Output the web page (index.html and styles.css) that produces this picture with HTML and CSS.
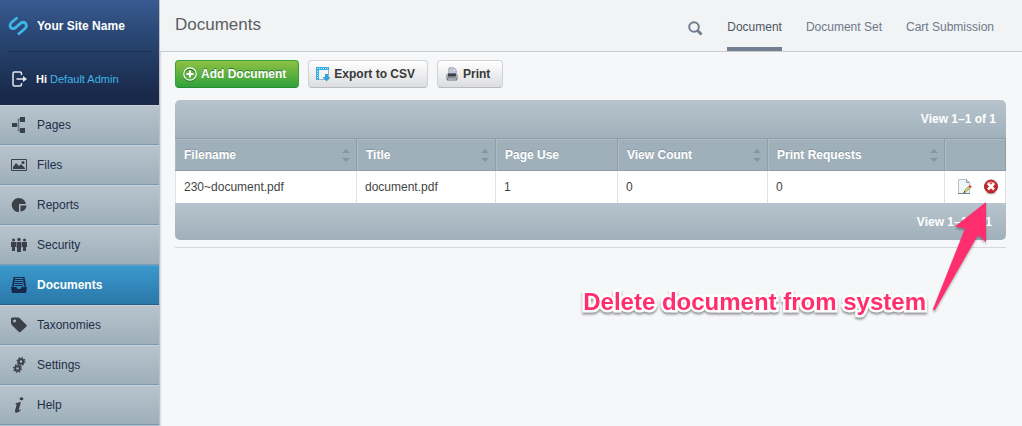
FILE: index.html
```html
<!DOCTYPE html>
<html lang="en">
<head>
    <meta charset="UTF-8">
    <meta name="viewport" content="width=device-width, initial-scale=1.0">
    <title>Documents</title>
    <link rel="stylesheet" href="styles.css">
</head>
<body>
    <div class="cms">
        <aside class="sidebar">
            <div class="sidebar-header">
                <a class="brand" href="#">
                    <svg class="brand-logo" width="20" height="20" viewBox="0 0 20 20" fill="none" stroke="#3fb5e8" stroke-width="2.800">
                        <path d="M9.500 1.500L4 6C0 9.500 3 14.500 7 12L13 7C17 4.500 20.500 9.500 16.500 13L10 18.500"/>
                    </svg>
                    <span>Your Site Name</span>
                </a>
                <div class="login">
                    <a href="#" aria-label="Log out">
                        <svg width="15" height="16" viewBox="0 0 15 16" fill="none" stroke="#e4e8ee" stroke-width="1.500">
                            <path d="M9.500 4V2.500Q9.500 1 8 1H2.500Q1 1 1 2.500v11Q1 15 2.500 15H8q1.500 0 1.500-1.500V12M4.500 8H12"/>
                            <path d="M11 5l4 3-4 3z" fill="#e4e8ee" stroke="none"/>
                        </svg>
                    </a>
                    <span>Hi <a href="#">Default Admin</a></span>
                </div>
            </div>
            <ul class="menu">
                <li><a href="#">
                    <svg width="16" height="16" viewBox="0 0 16 16" fill="#3b4049">
                        <path d="M1 6h5v4H1zM9 0h5v5H9zM9 11h5v5H9z"/>
                        <path d="M6 8h2M9 2.500H7.500v11H9" fill="none" stroke="#667380" stroke-width="1.500"/>
                    </svg>
                    Pages</a></li>
                <li><a href="#">
                    <svg width="16" height="16" viewBox="0 0 16 16" fill="#3b4049">
                        <path d="M.5 2.500h15v11H.5z" fill="none" stroke="#3b4049"/>
                        <path d="M2 12V10l3-4 3 3 2-2 4 4v1z"/>
                        <circle cx="12" cy="5.500" r="1.500"/>
                    </svg>
                    Files</a></li>
                <li><a href="#">
                    <svg width="16" height="16" viewBox="0 0 16 16" fill="#3b4049">
                        <path d="M7.500 1a7 7 0 0 1 7.400 6H8v8A7 7 0 1 1 7.500 1z"/>
                        <path d="M9.500 8.500h6a6 6 0 0 1-6 6z"/>
                    </svg>
                    Reports</a></li>
                <li><a href="#">
                    <svg width="16" height="16" viewBox="0 0 16 16" fill="#3b4049">
                        <circle cx="2.500" cy="3" r="1.500"/>
                        <circle cx="8" cy="2.500" r="1.700"/>
                        <circle cx="13.500" cy="3" r="1.500"/>
                        <path d="M0 5h5v5H4v4H1v-4H0zM5.500 5h5v5.500H10V15H6v-4.500h-.5zM11 5h5v5h-1v4h-3v-4h-1z"/>
                    </svg>
                    Security</a></li>
                <li><a class="current" href="#">
                    <svg width="16" height="16" viewBox="0 0 16 16" fill="#16294a">
                        <path d="M2.500 0h11L15 9.500h-2L12 1H4L3 9.500H1z"/>
                        <path d="M4 2h8v1H4zM4 4h8v1H4zM4 6h8v1H4zM4 8h8v1H4z"/>
                        <path d="M0 10h5.500l1 2h3l1-2H16L15 16H1z"/>
                    </svg>
                    Documents</a></li>
                <li><a href="#">
                    <svg width="16" height="16" viewBox="0 0 16 16" fill="#3b4049">
                        <path fill-rule="evenodd" d="M1.500.5l5.500 0q1 0 2 1l6.500 6.500q.7.700 0 1.400L9.500 15q-.8.700-1.500 0L1.300 8.500Q0 7.300 0 6V2Q0 .5 1.500.5zM3.500 2.500a1.500 1.500 0 1 0 .01 3 1.500 1.500 0 1 0-.01-3z"/>
                    </svg>
                    Taxonomies</a></li>
                <li><a href="#">
                    <svg width="16" height="16" viewBox="0 0 16 16" fill="none" stroke="#3b4049" stroke-width="2">
                        <circle cx="10" cy="4.500" r="2.300"/>
                        <circle cx="6.500" cy="11.500" r="2.300"/>
                        <circle cx="10" cy="4.500" r="3.700" stroke-width="1.500" stroke-dasharray="1.450 1.450"/>
                        <circle cx="6.500" cy="11.500" r="3.700" stroke-width="1.500" stroke-dasharray="1.450 1.450"/>
                    </svg>
                    Settings</a></li>
                <li><a href="#">
                    <svg width="16" height="16" viewBox="0 0 16 16" fill="#3b4049">
                        <ellipse cx="10.500" cy="1.800" rx="1.900" ry="1.500"/>
                        <path d="M4.500 6.500Q7 5 10 5L7.800 12.500q-.3 1.500 2-.2l.2.700Q7.500 16 5 15.800q-1.500-.3-1-2.300l1.500-5q.3-1.500-1-1.500z"/>
                    </svg>
                    Help</a></li>
            </ul>
        </aside>

        <main class="content">
            <header class="content-header">
                <h1>Documents</h1>
                <button class="search" type="button" aria-label="Search">
                    <svg width="15" height="15" viewBox="0 0 15 15" fill="none" stroke="#6f7d90">
                        <circle cx="6" cy="6" r="4.800" stroke-width="2"/>
                        <path d="M9.500 9.500l4 4" stroke-width="3"/>
                    </svg>
                </button>
                <nav class="tabs">
                    <a class="current" href="#">Document</a>
                    <a href="#">Document Set</a>
                    <a href="#">Cart Submission</a>
                </nav>
            </header>

            <div class="panel">
                <div class="actions">
                    <button class="btn btn-add" type="button">
                        <svg width="16" height="16" viewBox="0 0 16 16" fill="none" stroke="#fff">
                            <circle cx="8" cy="9" r="6" stroke="#23702b" stroke-width="1.500"/>
                            <circle cx="8" cy="8" r="6.200" stroke-width="1.300"/>
                            <path d="M8 4.500v7M4.500 8h7" stroke-width="2"/>
                        </svg>
                        Add Document
                    </button>
                    <button class="btn" type="button">
                        <svg width="16" height="16" viewBox="0 0 16 16">
                            <path d="M1.500 1.500h12v12h-12z" fill="#f2f6f9" stroke="#9db0bd"/>
                            <path d="M1 1h13v3H4v10H1z" fill="#35ade0"/>
                            <path d="M2 2.500h11M2.500 5v8" fill="none" stroke="#c4e9f8" stroke-dasharray="1 1"/>
                            <path d="M10 8h3v3h2.500l-4 4.500-4-4.500H10z" fill="#35a3d8"/>
                        </svg>
                        Export to CSV
                    </button>
                    <button class="btn" type="button">
                        <svg width="16" height="16" viewBox="0 0 16 16">
                            <path d="M5 2h5l2 2v4H5z" fill="#f4f7fb" stroke="#838b98"/>
                            <path d="M6 4h4M6 6h5" stroke="#8c98ac"/>
                            <path d="M2 9l2-2h8l2 2v4H2z" fill="#a7abb5"/>
                            <path d="M4 7.500h8v3H4z" fill="#3b4048"/>
                            <path d="M4 12h8l1 2H3z" fill="#e6e9ef" stroke="#656b76"/>
                            <path d="M11 11h2" stroke="#c6b958"/>
                        </svg>
                        Print
                    </button>
                </div>

                <div class="grid-holder">
                    <table class="grid">
                        <colgroup>
                            <col class="col-filename">
                            <col class="col-title">
                            <col class="col-use">
                            <col class="col-views">
                            <col class="col-prints">
                            <col class="col-actions">
                        </colgroup>
                        <thead>
                            <tr class="grid-bar">
                                <td colspan="6">View 1–1 of 1</td>
                            </tr>
                            <tr class="grid-heading">
                                <th>Filename <button class="sort" type="button" aria-label="Sort by Filename"></button></th>
                                <th>Title <button class="sort" type="button" aria-label="Sort by Title"></button></th>
                                <th>Page Use</th>
                                <th>View Count <button class="sort" type="button" aria-label="Sort by View Count"></button></th>
                                <th>Print Requests <button class="sort" type="button" aria-label="Sort by Print Requests"></button></th>
                                <th></th>
                            </tr>
                        </thead>
                        <tbody>
                            <tr>
                                <td>230~document.pdf</td>
                                <td>document.pdf</td>
                                <td>1</td>
                                <td>0</td>
                                <td>0</td>
                                <td>
                                    <div class="row-actions">
                                        <a href="#" aria-label="Edit">
                                            <svg width="16" height="16" viewBox="0 0 16 16">
                                                <path d="M1.500.5h8l3 3v11h-11z" fill="#eff5f8" stroke="#b4c2ca"/>
                                                <path d="M9.500.5v3h3" fill="#cfe0e8" stroke="#7f9baa"/>
                                                <path d="M1 14.500h12" stroke="#6f838d"/>
                                                <path d="M7 13.500l1-2.500 4-4 1.500 1.500-4 4z" fill="#d5d662" stroke="#7b8040" stroke-width=".6"/>
                                                <path d="M11.500 7.500l1.500-1.500 1.800 1.800-1.500 1.500z" fill="#dc3c50"/>
                                                <path d="M6.500 14l.7-2 1.300 1.300z" fill="#30343a"/>
                                            </svg>
                                        </a>
                                        <a href="#" aria-label="Delete">
                                            <svg width="16" height="16" viewBox="0 0 16 16">
                                                <ellipse cx="8" cy="14" rx="5" ry="1.500" fill="#ccc"/>
                                                <circle cx="8" cy="7.500" r="6.500" fill="#c9252d" stroke="#a3191f"/>
                                                <path d="M3 5.500a5.500 5 0 0 1 10 0q-5-2.500-10 0z" fill="#e98084"/>
                                                <path d="M5 4.500l6 6M11 4.500l-6 6" stroke="#fff" stroke-width="2.500"/>
                                            </svg>
                                        </a>
                                    </div>
                                </td>
                            </tr>
                        </tbody>
                        <tfoot>
                            <tr class="grid-bar grid-footer">
                                <td colspan="6">View 1–1 of 1</td>
                            </tr>
                        </tfoot>
                    </table>

                    <!-- help callout, points at the delete icon -->
                    <div class="callout">
                        <span>Delete document from system</span>
                        <svg width="56" height="112" viewBox="0 0 56 112" fill="#ff2e6f">
                            <path d="M54 1L23 25.500l10 2L1 108q0 2 2 1L46 34l8 7z"/>
                        </svg>
                    </div>
                </div>
            </div>
        </main>
    </div>
</body>
</html>
```

FILE: styles.css
```css
* {
    box-sizing: border-box;
}

body {
    margin: 0;
    font-family: "Liberation Sans", Arial, Helvetica, sans-serif;
    font-size: 12px;
    line-height: 16px;
    color: #444;
    background: #f6f7f9;
}

a {
    color: inherit;
    text-decoration: none;
}

svg {
    display: block;
    flex: none;
}

button {
    font: inherit;
    cursor: pointer;
}

.cms {
    display: flex;
    min-height: 100vh;
}

/* Left menu */
.sidebar {
    flex: none;
    width: 160px;
    background: #b0bec7;
    border-right: 1px solid #bfc0c2;
    box-shadow: 1px 0 1px #dcdde0;
}

.sidebar-header {
    height: 105px;
    padding: 0 8px;
    color: #fff;
    font-weight: bold;
    background: linear-gradient(#375a90, #2b4977 30%, #19294a 90%);
}

.brand {
    display: flex;
    align-items: center;
    gap: 9px;
    height: 52px;
    border-bottom: 1px solid #1a2f55;
}

.login {
    display: flex;
    align-items: center;
    gap: 9px;
    height: 53px;
    padding-left: 4px;
    font-size: 11px;
}

.login span a {
    color: #3fb5e8;
    font-weight: normal;
}

.menu {
    margin: 0;
    padding: 0;
    list-style: none;
}

.menu a {
    display: flex;
    align-items: center;
    gap: 10px;
    height: 40px;
    padding-left: 11px;
    color: #1f2f4a;
    background: linear-gradient(#b7c4cd, #9eafba);
    border-top: 1px solid #c6d0d8;
    border-bottom: 1px solid #7d99b0;
}

.menu a.current {
    color: #fff;
    font-weight: bold;
    background: linear-gradient(#3a98cd, #2b78a9);
    border-top-color: #55a4d0;
    border-bottom-color: #265f88;
}

/* Top bar */
.content {
    flex: 1;
    min-width: 0;
}

.content-header {
    display: flex;
    align-items: center;
    height: 52px;
    padding: 0 28px 0 15px;
    background: #f2f3f4;
    border-bottom: 1px solid #cacbce;
}

.content-header h1 {
    margin: 0 auto 2px 0;
    font-size: 17px;
    font-weight: normal;
    line-height: 24px;
    color: #5b5e63;
}

.search {
    margin: 6px 24px 0 0;
    padding: 0;
    background: none;
    border: 0;
}

.tabs {
    display: flex;
    gap: 24px;
    height: 51px;
    color: #6b7a8c;
}

.tabs a {
    padding-top: 19px;
    border-bottom: 4px solid transparent;
}

.tabs a.current {
    color: #4d5866;
    border-bottom-color: #737f90;
}

/* Main area */
.panel {
    padding: 8px 16px 16px 15px;
}

.actions {
    display: flex;
    gap: 9px;
    margin-bottom: 12px;
}

.btn {
    display: flex;
    align-items: center;
    gap: 3px;
    height: 28px;
    padding: 0 12px 0 6px;
    color: #393939;
    font-weight: bold;
    background: linear-gradient(#fff, #dcdde0);
    border: 1px solid #d0d2d6;
    border-bottom-color: #b9bbbf;
    border-radius: 4px;
}

.btn-add {
    color: #fff;
    text-shadow: 0 -1px 0 #2d7d32;
    background: linear-gradient(#8fc143, #2fa23a);
    border-color: #35a33c;
    border-bottom-color: #258b2f;
}

.grid-holder {
    position: relative;
    padding-bottom: 7px;
    border-bottom: 1px solid #d6d8db;
}

.grid {
    width: 100%;
    table-layout: fixed;
    border-collapse: separate;
    border-spacing: 0;
}

.col-title {
    width: 139px;
}

.col-use {
    width: 122px;
}

.col-views {
    width: 150px;
}

.col-prints {
    width: 177px;
}

.col-actions {
    width: 61px;
}

.grid-bar td {
    height: 38px;
    padding: 0 10px;
    color: #fff;
    font-weight: bold;
    text-align: right;
    background: linear-gradient(#b7c4cd, #a0b0ba);
    border-radius: 5px 5px 0 0;
}

.grid-footer td {
    height: 37px;
    padding-right: 14px;
    border-radius: 0 0 5px 5px;
}

.grid-heading th {
    position: relative;
    height: 33px;
    padding: 0 9px;
    color: #fff;
    text-align: left;
    text-shadow: 0 -1px 0 #8495a1;
    background: #a0b0ba;
    border-top: 1px solid #8d9eaa;
    border-right: 1px solid #8d9eaa;
    border-bottom: 1px solid #8d9eaa;
    box-shadow: inset 1px 1px 0 #aebcc5;
}

.sort {
    position: absolute;
    top: 10px;
    right: 6px;
    width: 8px;
    height: 13px;
    padding: 0;
    background: none;
    border: 0;
}

.sort::before,
.sort::after {
    content: "";
    position: absolute;
    left: 0;
    border: 4px solid transparent;
}

.sort::before {
    top: -4px;
    border-bottom-color: #8696a1;
}

.sort::after {
    bottom: -4px;
    border-top-color: #8696a1;
}

.grid tbody td {
    height: 32px;
    padding: 0 8px;
    background: #fff;
    border-right: 1px solid #dfe3e6;
}

.grid tbody td:first-child {
    border-left: 1px solid #dfe3e6;
}

.row-actions {
    display: flex;
    gap: 10px;
    padding-left: 4px;
}

/* Callout */
.callout {
    position: absolute;
    top: 101px;
    right: 18px;
    display: flex;
    align-items: flex-end;
    gap: 6px;
    pointer-events: none;
}

.callout span {
    color: #ff2e6f;
    font-size: 24px;
    font-weight: bold;
    line-height: 22px;
    white-space: nowrap;
    -webkit-text-stroke: 5px #fff;
    paint-order: stroke fill;
    filter: drop-shadow(0 2px 1px rgba(0, 0, 0, 0.4));
}

.callout svg {
    filter: drop-shadow(0 2px 1px rgba(0, 0, 0, 0.3));
}
```
